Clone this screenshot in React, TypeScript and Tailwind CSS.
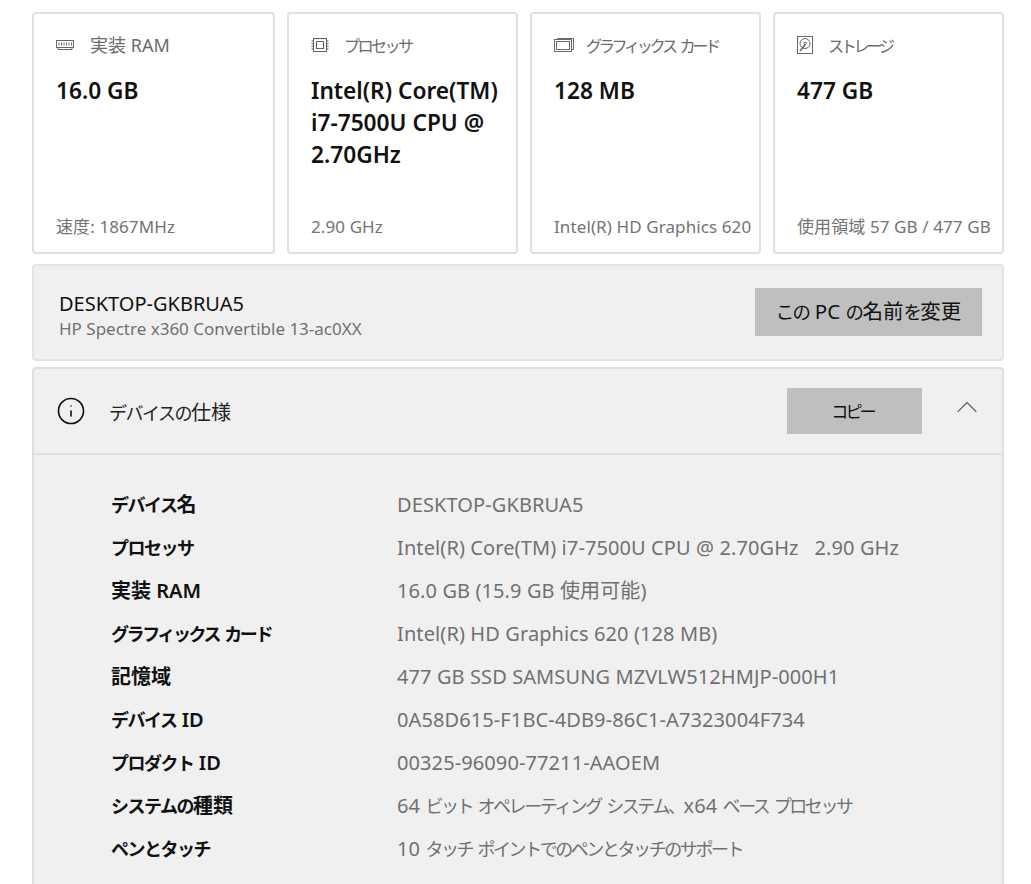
import { ChevronUp, Info } from "lucide-react";
import type { ReactNode } from "react";

// kana in the reference is much narrower than Noto's, so squeeze just those runs
const squeeze = {
  normal: "text-[0.9em] tracking-[-0.083em]",
  tight: "text-[0.9em] tracking-[-0.135em]",
  small: "text-[0.9em] tracking-[-0.167em]",
  smaller: "text-[0.9em] tracking-[-0.21em]",
};

const Jp = ({ text, fit = "normal" }: { text: string; fit?: keyof typeof squeeze }) => (
  <>
    {text.split(/([\u3040-\u30ff、]+)/).map((part, i) =>
      i % 2 === 1 ? (
        <span key={i} className={squeeze[fit]}>
          {part}
        </span>
      ) : (
        <span key={i}>{part}</span>
      ),
    )}
  </>
);

const RamIcon = () => (
  <svg width="18" height="12" viewBox="0 0 18 12" fill="none" stroke="#666" strokeWidth="1">
    <rect x="0.5" y="1.5" width="17" height="7" />
    <path d="M3 3.5v3M5.5 3.5v3M8 3.5v3M10.5 3.5v3M13 3.5v3M15.5 3.5v3" />
    <path d="M2 8.5v2h14v-2" />
  </svg>
);

const CpuIcon = () => (
  <svg width="18" height="18" viewBox="0 0 18 18" fill="none" stroke="#5f5f5f" strokeWidth="1">
    <rect x="2.5" y="2.5" width="13" height="13" />
    <rect x="5.5" y="5.5" width="7" height="7" />
    <path d="M0.5 5h2M0.5 7.7h2M0.5 10.3h2M0.5 13h2M15.5 5h2M15.5 7.7h2M15.5 10.3h2M15.5 13h2" />
  </svg>
);

const GpuIcon = () => (
  <svg width="20" height="16" viewBox="0 0 20 16" fill="none" stroke="#6a6a6a" strokeWidth="1">
    <path d="M3.5 2.5v-1h16v11h-2" />
    <rect x="0.5" y="2.5" width="17" height="12" />
    <rect x="2.5" y="4.5" width="13" height="8" />
  </svg>
);

const DiskIcon = () => (
  <svg width="16" height="18" viewBox="0 0 16 18" fill="none" stroke="#666" strokeWidth="1">
    <rect x="0.5" y="0.5" width="15" height="17" />
    <circle cx="8" cy="7.5" r="5" />
    <circle cx="8" cy="7.5" r="1.2" />
    <path d="M3 15l5-6" strokeWidth="1.6" />
  </svg>
);

const cards: {
  w: string;
  icon: ReactNode;
  iconBox: string;
  label: string;
  fit: keyof typeof squeeze;
  value: ReactNode;
  foot: string;
}[] = [
  { w: "w-[243px]", icon: <RamIcon />, iconBox: "w-[34px]", label: "実装 RAM", fit: "small", value: "16.0 GB", foot: "速度: 1867MHz" },
  {
    w: "w-[231px]",
    icon: <CpuIcon />,
    iconBox: "w-[33px]",
    label: "プロセッサ",
    fit: "small",
    value: (
      <>
        Intel(R) Core(TM)
        <br />
        i7-7500U CPU @
        <br />
        2.70GHz
      </>
    ),
    foot: "2.90 GHz",
  },
  { w: "w-[231px]", icon: <GpuIcon />, iconBox: "w-[32px]", label: "グラフィックス カード", fit: "smaller", value: "128 MB", foot: "Intel(R) HD Graphics 620" },
  { w: "w-[231px]", icon: <DiskIcon />, iconBox: "w-[31px]", label: "ストレージ", fit: "smaller", value: "477 GB", foot: "使用領域 57 GB / 477 GB" },
];

const specs: [string, string, keyof typeof squeeze][] = [
  ["デバイス名", "DESKTOP-GKBRUA5", "normal"],
  ["プロセッサ", "Intel(R) Core(TM) i7-7500U CPU @ 2.70GHz   2.90 GHz", "normal"],
  ["実装 RAM", "16.0 GB (15.9 GB 使用可能)", "normal"],
  ["グラフィックス カード", "Intel(R) HD Graphics 620 (128 MB)", "tight"],
  ["記憶域", "477 GB SSD SAMSUNG MZVLW512HMJP-000H1", "normal"],
  ["デバイス ID", "0A58D615-F1BC-4DB9-86C1-A7323004F734", "normal"],
  ["プロダクト ID", "00325-96090-77211-AAOEM", "normal"],
  ["システムの種類", "64 ビット オペレーティング システム、x64 ベース プロセッサ", "normal"],
  ["ペンとタッチ", "10 タッチ ポイントでのペンとタッチのサポート", "normal"],
];

export default function App() {
  return (
    <div className="h-[884px] overflow-hidden bg-white pt-3 pr-[27px] pl-8 font-['Noto_Sans','Noto_Sans_CJK_JP',sans-serif]">
      <div className="flex gap-3">
        {cards.map((card) => (
          <div key={card.label} className={`${card.w} flex h-[242px] flex-col rounded-sm border-2 border-[#e0e0e0] pr-1 pl-[22px]`}>
            <div className="mt-[19px] flex h-6 items-center">
              <div className={`${card.iconBox} flex shrink-0 items-center`}>{card.icon}</div>
              <span className="text-[18px] whitespace-nowrap text-[#6b6b6b]">
                <Jp text={card.label} fit={card.fit} />
              </span>
            </div>
            <div className="mt-[18px] text-[22.7px] leading-8 font-semibold whitespace-nowrap text-[#111]">{card.value}</div>
            <div className="mt-auto mb-[13px] text-[17px] tracking-[0.1px] whitespace-nowrap text-[#737373]">{card.foot}</div>
          </div>
        ))}
      </div>

      <div className="mt-[10px] flex h-[97px] items-center justify-between rounded-sm border-2 border-[#e4e4e4] bg-[#f0f0f0] pr-5 pl-[25px]">
        <div className="mt-[6px]">
          <div className="text-[20px] leading-[26px] text-[#111]">DESKTOP-GKBRUA5</div>
          <div className="text-[17px] leading-[24px] text-[#707070]">HP Spectre x360 Convertible 13-ac0XX</div>
        </div>
        <button className="mb-[2px] flex h-12 w-[227px] items-center justify-center bg-[#bfbfbf] text-[20.5px] text-[#111]">
          <span>
            <Jp text="この PC の名前を変更" />
          </span>
        </button>
      </div>

      <div className="mt-[6px] rounded-sm border-2 border-[#dedede] bg-[#f0f0f0]">
        <div className="flex h-[86px] items-center border-b-2 border-[#e0e0e0] pl-[22px]">
          <Info size={30} strokeWidth={1.3} className="text-[#111]" />
          <span className="mt-1 ml-[23px] text-[20px] text-[#222]">
            <Jp text="デバイスの仕様" />
          </span>
          <button className="mr-[27px] ml-auto flex h-[46px] w-[135px] items-center justify-center bg-[#bfbfbf] pr-1 text-[19px] text-[#111]">
            <span>
              <Jp text="コピー" fit="small" />
            </span>
          </button>
          <ChevronUp size={36} strokeWidth={0.8} className="mr-[17px] mb-2 text-[#666]" />
        </div>
        <div className="flex flex-col pt-[28px] pb-10 pl-[77px]">
          {specs.map(([name, value, fit]) => (
            <div key={name} className="flex h-[43px] items-center">
              <div className="w-[286px] shrink-0 text-[20px] font-semibold whitespace-nowrap text-[#111]">
                <Jp text={name} fit={fit} />
              </div>
              <div className="text-[20px] tracking-[0.1px] whitespace-pre text-[#707070]">
                <Jp text={value} fit="tight" />
              </div>
            </div>
          ))}
        </div>
      </div>
    </div>
  );
}
